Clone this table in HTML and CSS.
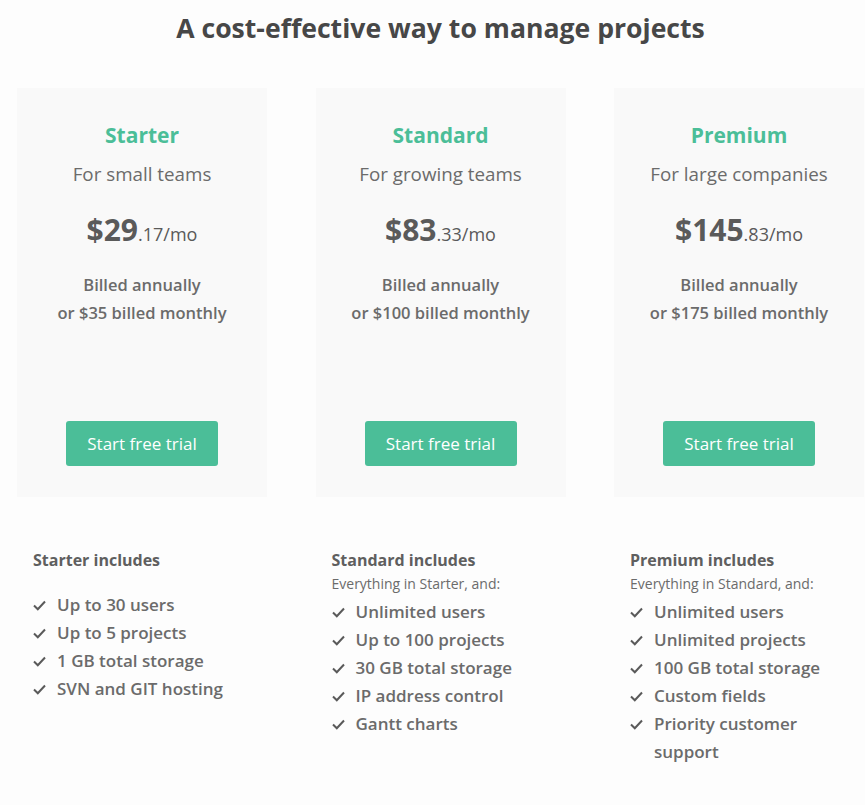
FILE: index.html
```html
<!DOCTYPE html>
<html lang="en">
<head>
    <meta charset="UTF-8">
    <meta name="viewport" content="width=device-width, initial-scale=1.0">
    <title>Pricing</title>
    <link rel="stylesheet" href="styles.css">
</head>
<body>
    <div class="page">
        <h1 class="page-title">A cost-effective way to manage projects</h1>

        <div class="plans">
            <div class="plan">
                <div class="plan-card">
                    <h2 class="plan-name">Starter</h2>
                    <p class="plan-audience">For small teams</p>
                    <p class="plan-price"><span class="price-main">$29</span><span class="price-rest">.17/mo</span></p>
                    <p class="plan-billing">Billed annually<br>or $35 billed monthly</p>
                    <button class="trial-button" type="button">Start free trial</button>
                </div>
                <div class="plan-features">
                    <h3 class="features-title">Starter includes</h3>
                    <ul class="features-list features-list--spaced">
                        <li><svg class="check" viewBox="0 0 13 11"><polyline points="1,5.5 4.8,9.3 12,1.5"/></svg><span>Up to 30 users</span></li>
                        <li><svg class="check" viewBox="0 0 13 11"><polyline points="1,5.5 4.8,9.3 12,1.5"/></svg><span>Up to 5 projects</span></li>
                        <li><svg class="check" viewBox="0 0 13 11"><polyline points="1,5.5 4.8,9.3 12,1.5"/></svg><span>1 GB total storage</span></li>
                        <li><svg class="check" viewBox="0 0 13 11"><polyline points="1,5.5 4.8,9.3 12,1.5"/></svg><span>SVN and GIT hosting</span></li>
                    </ul>
                </div>
            </div>

            <div class="plan">
                <div class="plan-card">
                    <h2 class="plan-name">Standard</h2>
                    <p class="plan-audience">For growing teams</p>
                    <p class="plan-price"><span class="price-main">$83</span><span class="price-rest">.33/mo</span></p>
                    <p class="plan-billing">Billed annually<br>or $100 billed monthly</p>
                    <button class="trial-button" type="button">Start free trial</button>
                </div>
                <div class="plan-features">
                    <h3 class="features-title">Standard includes</h3>
                    <p class="features-note">Everything in Starter, and:</p>
                    <ul class="features-list">
                        <li><svg class="check" viewBox="0 0 13 11"><polyline points="1,5.5 4.8,9.3 12,1.5"/></svg><span>Unlimited users</span></li>
                        <li><svg class="check" viewBox="0 0 13 11"><polyline points="1,5.5 4.8,9.3 12,1.5"/></svg><span>Up to 100 projects</span></li>
                        <li><svg class="check" viewBox="0 0 13 11"><polyline points="1,5.5 4.8,9.3 12,1.5"/></svg><span>30 GB total storage</span></li>
                        <li><svg class="check" viewBox="0 0 13 11"><polyline points="1,5.5 4.8,9.3 12,1.5"/></svg><span>IP address control</span></li>
                        <li><svg class="check" viewBox="0 0 13 11"><polyline points="1,5.5 4.8,9.3 12,1.5"/></svg><span>Gantt charts</span></li>
                    </ul>
                </div>
            </div>

            <div class="plan">
                <div class="plan-card">
                    <h2 class="plan-name">Premium</h2>
                    <p class="plan-audience">For large companies</p>
                    <p class="plan-price"><span class="price-main">$145</span><span class="price-rest">.83/mo</span></p>
                    <p class="plan-billing">Billed annually<br>or $175 billed monthly</p>
                    <button class="trial-button" type="button">Start free trial</button>
                </div>
                <div class="plan-features">
                    <h3 class="features-title">Premium includes</h3>
                    <p class="features-note">Everything in Standard, and:</p>
                    <ul class="features-list">
                        <li><svg class="check" viewBox="0 0 13 11"><polyline points="1,5.5 4.8,9.3 12,1.5"/></svg><span>Unlimited users</span></li>
                        <li><svg class="check" viewBox="0 0 13 11"><polyline points="1,5.5 4.8,9.3 12,1.5"/></svg><span>Unlimited projects</span></li>
                        <li><svg class="check" viewBox="0 0 13 11"><polyline points="1,5.5 4.8,9.3 12,1.5"/></svg><span>100 GB total storage</span></li>
                        <li><svg class="check" viewBox="0 0 13 11"><polyline points="1,5.5 4.8,9.3 12,1.5"/></svg><span>Custom fields</span></li>
                        <li><svg class="check" viewBox="0 0 13 11"><polyline points="1,5.5 4.8,9.3 12,1.5"/></svg><span>Priority customer support</span></li>
                    </ul>
                </div>
            </div>
        </div>
    </div>
</body>
</html>
```

FILE: styles.css
```css
:root {
    --brand-green: #4bbe98;
    --card-bg: #f9f9f9;
    --text-dark: #474747;
    --text-mid: #5f5f5f;
    --text-light: #6b6b6b;
}

body {
    margin: 0;
    padding: 0;
    background: #fdfdfd;
    font-family: 'Open Sans', 'Liberation Sans', sans-serif;
    color: var(--text-mid);
}

.page {
    width: 847px;
    padding: 0 0 0 17px;
}

.page-title {
    margin: 0;
    padding-top: 11px;
    height: 88px;
    box-sizing: border-box;
    text-align: center;
    font-size: 26.6px;
    line-height: 34px;
    font-weight: 700;
    color: var(--text-dark);
}

.plans {
    display: flex;
    justify-content: space-between;
}

.plan {
    width: 250px;
}

.plan-card {
    height: 409px;
    box-sizing: border-box;
    padding: 32px 0 31px;
    background: var(--card-bg);
    text-align: center;
    display: flex;
    flex-direction: column;
    align-items: center;
}

.plan-name {
    margin: 0;
    font-size: 21px;
    line-height: 30px;
    font-weight: 700;
    color: var(--brand-green);
}

.plan-audience {
    margin: 11px 0 0;
    font-size: 18.8px;
    line-height: 26px;
    color: var(--text-light);
}

.plan-price {
    margin: 23px 0 0;
    line-height: 40px;
    color: #5a5a5a;
}

.price-main {
    font-size: 30px;
    font-weight: 700;
}

.price-rest {
    font-size: 18px;
}

.plan-billing {
    margin: 16px 0 0;
    font-size: 16.5px;
    line-height: 28px;
    font-weight: 600;
    color: var(--text-light);
}

.trial-button {
    margin-top: auto;
    width: 152px;
    height: 45px;
    border: none;
    border-radius: 3px;
    background: var(--brand-green);
    color: #fff;
    font-family: inherit;
    font-size: 17px;
    cursor: pointer;
}

.plan-features {
    padding: 51px 0 0 16px;
}

.features-title {
    margin: 0;
    font-size: 16px;
    line-height: 24px;
    font-weight: 700;
    color: var(--text-mid);
}

.features-note {
    margin: 2px 0 0;
    font-size: 14px;
    line-height: 20px;
    color: var(--text-light);
}

.features-list {
    list-style: none;
    margin: 4px 0 0;
    padding: 0;
    width: 200px;
}

.features-list--spaced {
    margin-top: 19px;
}

.features-list li {
    display: flex;
    align-items: flex-start;
    gap: 11px;
    font-size: 17px;
    line-height: 28px;
    font-weight: 600;
    color: var(--text-light);
}

.check {
    flex: none;
    width: 13px;
    height: 11px;
    margin-top: 9px;
    fill: none;
    stroke: #5a5a5a;
    stroke-width: 2;
}
```
